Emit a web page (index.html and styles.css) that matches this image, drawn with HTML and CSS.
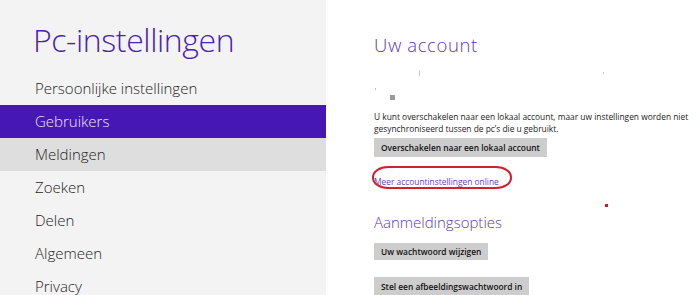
FILE: index.html
```html
<!DOCTYPE html>
<html lang="nl">
<head>
  <meta charset="UTF-8">
  <title>Pc-instellingen</title>
  <link rel="stylesheet" href="styles.css">
</head>
<body>
  <aside class="nav">
    <h1 class="nav-title">Pc-instellingen</h1>
    <ul class="nav-list">
      <li class="nav-item">Persoonlijke instellingen</li>
      <li class="nav-item active">Gebruikers</li>
      <li class="nav-item hover">Meldingen</li>
      <li class="nav-item">Zoeken</li>
      <li class="nav-item">Delen</li>
      <li class="nav-item">Algemeen</li>
      <li class="nav-item">Privacy</li>
    </ul>
  </aside>
  <main class="content">
    <h2 class="section-title">Uw account</h2>
    <div class="account-info">
      <span class="speck speck-a"></span>
      <span class="speck speck-b"></span>
      <span class="speck speck-c"></span>
      <span class="avatar"></span>
    </div>
    <p class="note">U kunt overschakelen naar een lokaal account, maar uw instellingen worden niet gesynchroniseerd tussen de pc’s die u gebruikt.</p>
    <button class="btn">Overschakelen naar een lokaal account</button>
    <div class="link-row">
      <a href="#" class="link">Meer accountinstellingen online</a>
      <span class="marker"></span>
      <span class="dot"></span>
    </div>
    <h2 class="section-title big">Aanmeldingsopties</h2>
    <button class="btn first">Uw wachtwoord wijzigen</button>
    <button class="btn">Stel een afbeeldingswachtwoord in</button>
  </main>
</body>
</html>
```

FILE: styles.css
```css
    body {
      margin: 0;
      height: 295px;
      display: flex;
      overflow: hidden;
      font-family: 'Open Sans', 'Noto Sans', sans-serif;
      background-color: #ffffff;
    }
    .nav {
      width: 326px;
      flex-shrink: 0;
      background-color: #f3f3f3;
    }
    .nav-title {
      margin: 0;
      padding: 18px 0 0 33px;
      height: 72px;
      box-sizing: border-box;
      line-height: 44px;
      font-size: 32px;
      font-weight: 300;
      color: #4a24ae;
      letter-spacing: -0.4px;
    }
    .nav-list {
      list-style: none;
      margin: 0;
      padding: 0;
    }
    .nav-item {
      height: 33px;
      line-height: 33px;
      padding-left: 35px;
      font-size: 15px;
      font-weight: 300;
      color: #1e1e1e;
    }
    .nav-item.active {
      background-color: #4617b4;
      color: #ece6f8;
    }
    .nav-item.hover {
      background-color: #dedede;
    }
    .content {
      flex: 1;
      padding: 35px 0 0 48px;
      display: flex;
      flex-direction: column;
      align-items: flex-start;
    }
    .section-title {
      margin: 0;
      font-size: 18.5px;
      line-height: 20px;
      font-weight: 300;
      letter-spacing: 0.6px;
      color: #5b3ab4;
    }
    .section-title.big {
      font-size: 15px;
      line-height: 22px;
      letter-spacing: 0;
      margin-top: 22px;
    }
    .account-info {
      position: relative;
      height: 58px;
      width: 240px;
    }
    .speck {
      position: absolute;
      width: 1px;
      height: 5px;
      background-color: #c4c4c4;
    }
    .speck-a { left: 45px; top: 16px; }
    .speck-b { left: 229px; top: 17px; height: 2px; }
    .speck-c { left: 1px; top: 33px; height: 2px; }
    .avatar {
      position: absolute;
      left: 16px;
      top: 40px;
      width: 5px;
      height: 5px;
      background-color: #9c9c9c;
    }
    .note {
      margin: 0;
      width: 332px;
      font-size: 8.4px;
      line-height: 12px;
      color: #222222;
    }
    .btn {
      margin-top: 3px;
      border: none;
      background-color: #cdcdcd;
      padding: 0 7px;
      height: 19px;
      font-family: 'Open Sans', 'Noto Sans', sans-serif;
      font-size: 8.4px;
      font-weight: 600;
      color: #111111;
    }
    .btn.first {
      margin-top: 10px;
      height: 18px;
    }
    .btn.first + .btn {
      margin-top: 17px;
      height: 18px;
    }
    .link-row {
      position: relative;
      margin-top: 15px;
      line-height: 14px;
    }
    .link {
      font-size: 8.4px;
      color: #6a3ad6;
      text-decoration: none;
    }
    .marker {
      position: absolute;
      left: -2px;
      top: -6px;
      width: 140px;
      height: 23px;
      box-sizing: border-box;
      border: 2px solid #d4202e;
      border-radius: 16px / 11px;
    }
    .dot {
      position: absolute;
      left: 231px;
      top: 32px;
      width: 3px;
      height: 3px;
      background-color: #e01020;
    }
```
